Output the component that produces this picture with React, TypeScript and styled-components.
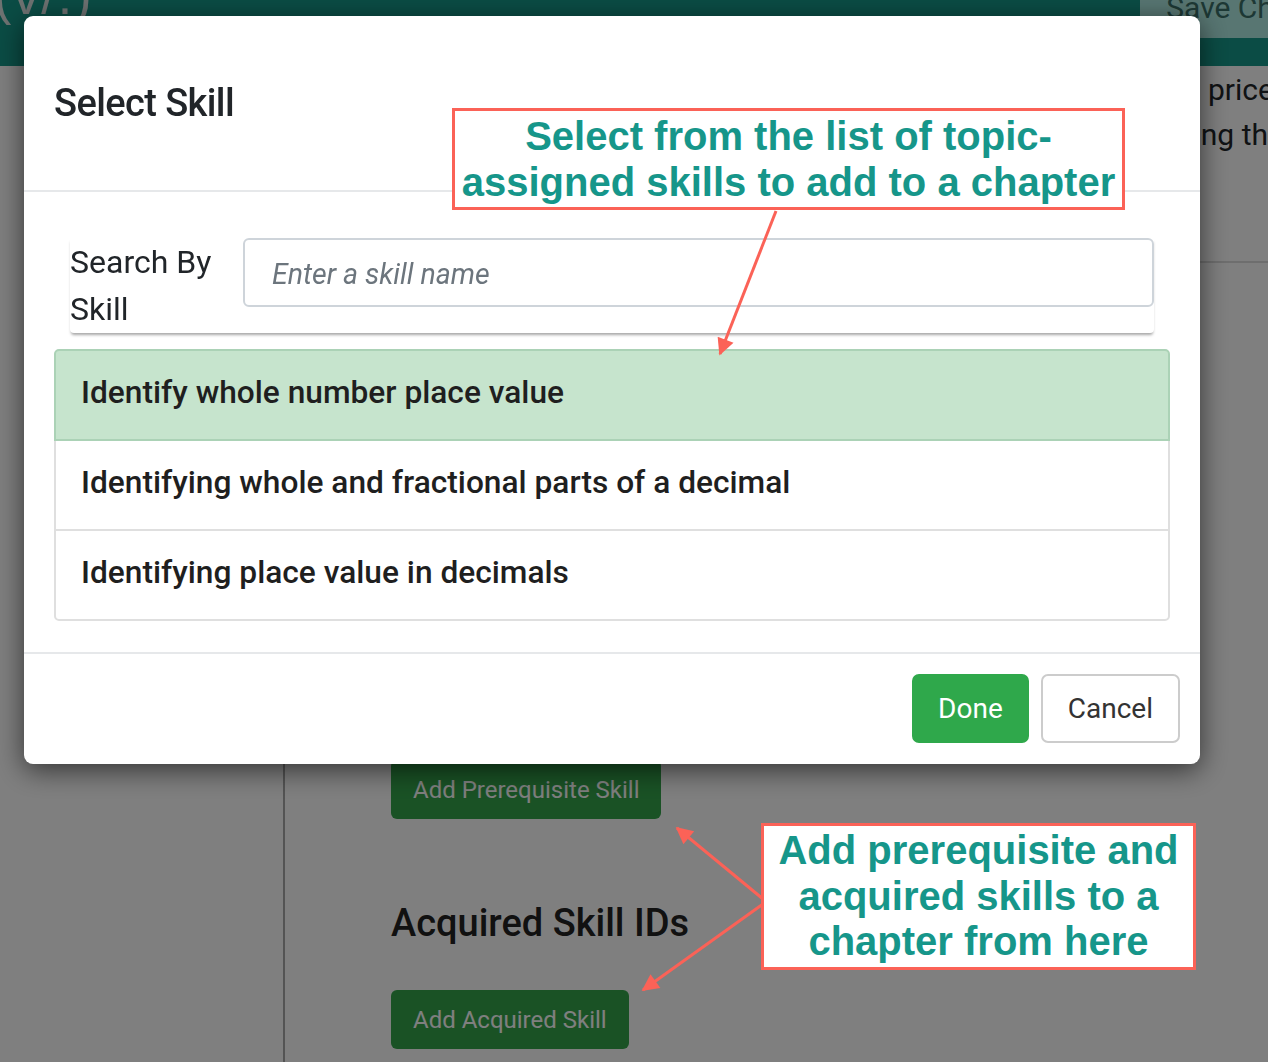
import React from "react"
import styled, { createGlobalStyle } from "styled-components"

const teal = "#16968a"
const coral = "#fb6257"

const skills = [
  "Identify whole number place value",
  "Identifying whole and fractional parts of a decimal",
  "Identifying place value in decimals",
]

const App = () => {
  return (
    <>
      <GlobalStyle />
      <StyledPage>
        <StyledTopBar>
          <StyledLogo>(v/.)</StyledLogo>
          <StyledSaveButton>Save Changes</StyledSaveButton>
        </StyledTopBar>
        <StyledLayout>
          <StyledSidebar />
          <StyledMain>
            <StyledIntro>
              <StyledIntroLine>prices for</StyledIntroLine>
              <StyledIntroLine $shift={ -30 }>sing the</StyledIntroLine>
            </StyledIntro>
            <StyledDivider />
            <StyledSection>
              <StyledSectionTitle>Prerequisite Skill IDs</StyledSectionTitle>
              <StyledPageButton>Add Prerequisite Skill</StyledPageButton>
            </StyledSection>
            <StyledSection>
              <StyledSectionTitle>Acquired Skill IDs</StyledSectionTitle>
              <StyledPageButton>Add Acquired Skill</StyledPageButton>
            </StyledSection>
          </StyledMain>
        </StyledLayout>
      </StyledPage>

      <StyledBackdrop />

      <StyledModal>
        <StyledModalHeader>
          <StyledModalTitle>Select Skill</StyledModalTitle>
        </StyledModalHeader>
        <StyledModalBody>
          <StyledSearch>
            <StyledSearchLabel>Search By Skill</StyledSearchLabel>
            <StyledSearchInput placeholder="Enter a skill name" />
          </StyledSearch>
          <StyledList>
            {
              skills.map((s, i) => (
                <StyledListItem key={ s } $active={ i === 0 }>{ s }</StyledListItem>
              ))
            }
          </StyledList>
        </StyledModalBody>
        <StyledModalFooter>
          <StyledFooterButton $variant="primary">Done</StyledFooterButton>
          <StyledFooterButton $variant="secondary">Cancel</StyledFooterButton>
        </StyledModalFooter>
      </StyledModal>

      <StyledArrows width="1268" height="1062" viewBox="0 0 1268 1062">
        <defs>
          <marker id="head" viewBox="0 0 10 10" refX="9" refY="5" markerWidth="22" markerHeight="17" markerUnits="userSpaceOnUse" orient="auto">
            <path d="M0,0 L10,5 L0,10 z" fill={ coral } />
          </marker>
        </defs>
        <line x1="776" y1="211" x2="720" y2="354" stroke={ coral } strokeWidth="3" markerEnd="url(#head)" />
        <line x1="763" y1="899" x2="677" y2="828" stroke={ coral } strokeWidth="3" markerEnd="url(#head)" />
        <line x1="763" y1="904" x2="643" y2="990" stroke={ coral } strokeWidth="3" markerEnd="url(#head)" />
      </StyledArrows>

      <StyledCallout $top={ 108 } $left={ 452 } $width={ 673 } $lineHeight={ 46 }>
        Select from the list of topic-<br />assigned skills to add to a chapter
      </StyledCallout>
      <StyledCallout $top={ 823 } $left={ 761 } $width={ 435 } $lineHeight={ 45.5 }>
        Add prerequisite and<br />acquired skills to a<br />chapter from here
      </StyledCallout>
    </>
  )
}

const GlobalStyle = createGlobalStyle`
  html, body {
    margin: 0;
    padding: 0;
  }
  body {
    width: 1268px;
    height: 1062px;
    overflow: hidden;
    background: #ffffff;
    color: #212529;
    font-family: Roboto, "Liberation Sans", sans-serif;
  }
  * {
    box-sizing: border-box;
  }
`

const StyledPage = styled("div")`
  width: 1268px;
  height: 1062px;
  overflow: hidden;
  display: flex;
  flex-direction: column;
`

const StyledTopBar = styled("header")`
  height: 96px;
  margin-top: -30px;
  flex-shrink: 0;
  background-color: #16998a;
  display: flex;
  justify-content: space-between;
  align-items: flex-start;
`

const StyledLogo = styled("div")`
  margin: -4px 0 0 -6px;
  font-family: "Liberation Sans", sans-serif;
  font-size: 52px;
  line-height: 60px;
  color: #dce4e3;
  letter-spacing: 2px;
`

const StyledSaveButton = styled("button")`
  height: 68px;
  margin-right: -113px;
  padding: 8px 26px 0;
  border: 0;
  border-radius: 0 0 0 6px;
  background-color: #b0ede5;
  color: #3a7069;
  font-family: Roboto, sans-serif;
  font-size: 30px;
  line-height: 36px;
  white-space: nowrap;
`

const StyledLayout = styled("div")`
  flex: 1;
  display: grid;
  grid-template-columns: 285px 1fr;
`

const StyledSidebar = styled("aside")`
  border-right: 2px solid #a8a8a8;
`

const StyledMain = styled("main")`
  display: flex;
  flex-direction: column;
  min-width: 0;
`

const StyledIntro = styled("div")`
  padding: 1px 0 0 923px;
  font-size: 30px;
  line-height: 45px;
  color: #212529;
  white-space: nowrap;
`

const StyledIntroLine = styled("div")<{ $shift?: number }>`
  margin-left: ${ ({ $shift }) => $shift ?? 0 }px;
`

const StyledDivider = styled("hr")`
  margin: 104px 0 0;
  border: 0;
  border-top: 2px solid #dcdcdc;
`

const StyledSection = styled("section")`
  padding-left: 106px;
  &:first-of-type {
    margin-top: 408px;
  }
  & + & {
    margin-top: 82px;
  }
`

const StyledSectionTitle = styled("h3")`
  margin: 0 0 44px;
  font-size: 38px;
  line-height: 45px;
  font-weight: 500;
  color: #222;
`

const StyledPageButton = styled("button")`
  height: 59px;
  padding: 0 22px;
  border: 0;
  border-radius: 6px;
  background-color: #34a54b;
  color: #ffffff;
  font-family: Roboto, sans-serif;
  font-size: 24px;
`

const StyledBackdrop = styled("div")`
  position: fixed;
  inset: 0;
  background-color: rgba(0, 0, 0, 0.5);
`

const StyledModal = styled("div")`
  position: fixed;
  top: 16px;
  left: 24px;
  width: 1176px;
  background: #ffffff;
  border-radius: 9px;
  box-shadow: 0 6px 28px rgba(0, 0, 0, 0.6);
  display: flex;
  flex-direction: column;
`

const StyledModalHeader = styled("div")`
  padding: 64px 30px 64px;
  border-bottom: 2px solid #e6e8ea;
`

const StyledModalTitle = styled("h2")`
  margin: 0;
  font-size: 38px;
  line-height: 46px;
  font-weight: 500;
  letter-spacing: -0.6px;
  color: #212529;
`

const StyledModalBody = styled("div")`
  padding: 46px 30px 31px;
  display: flex;
  flex-direction: column;
  gap: 16px;
`

const StyledSearch = styled("div")`
  margin: 0 16px;
  display: grid;
  grid-template-columns: 173px 1fr;
  align-items: start;
  background: #ffffff;
  border-radius: 0 0 4px 4px;
  box-shadow: 0 3px 3px -1px rgba(0, 0, 0, 0.35);
`

const StyledSearchLabel = styled("label")`
  font-size: 32px;
  line-height: 47px;
  color: #212529;
  padding-top: 1px;
`

const StyledSearchInput = styled("input")`
  height: 69px;
  width: 100%;
  padding: 4px 27px 0;
  border: 2px solid #ced4da;
  border-radius: 6px;
  font-family: Roboto, sans-serif;
  font-size: 28.5px;
  color: #495057;
  outline: none;
  &::placeholder {
    font-style: italic;
    color: #6c757d;
  }
`

const StyledList = styled("div")`
  display: flex;
  flex-direction: column;
`

const StyledListItem = styled("div")<{ $active?: boolean }>`
  position: relative;
  height: 92px;
  padding: 0 25px 6px;
  display: flex;
  align-items: center;
  border: 2px solid ${ ({ $active }) => $active ? "#abd2b6" : "#dfdfdf" };
  background-color: ${ ({ $active }) => $active ? "#c6e4cd" : "#ffffff" };
  z-index: ${ ({ $active }) => $active ? 1 : 0 };
  font-size: 31.7px;
  font-weight: 500;
  color: #1f1f1f;
  & + & {
    margin-top: -2px;
  }
  &:first-child {
    border-radius: 5px 5px 0 0;
  }
  &:last-child {
    border-radius: 0 0 5px 5px;
  }
`

const StyledModalFooter = styled("div")`
  padding: 20px 20px 21px;
  border-top: 2px solid #e6e8ea;
  display: flex;
  justify-content: flex-end;
  gap: 12px;
`

const StyledFooterButton = styled("button")<{ $variant: "primary" | "secondary" }>`
  height: 69px;
  padding: 0 ${ ({ $variant }) => $variant === "primary" ? 24 : 25 }px;
  border-radius: 7px;
  border: 2px solid ${ ({ $variant }) => $variant === "primary" ? "#2fa84b" : "#cccccc" };
  background-color: ${ ({ $variant }) => $variant === "primary" ? "#2fa84b" : "#ffffff" };
  color: ${ ({ $variant }) => $variant === "primary" ? "#ffffff" : "#333333" };
  font-family: Roboto, sans-serif;
  font-size: 28px;
`

const StyledArrows = styled("svg")`
  position: absolute;
  top: 0;
  left: 0;
  pointer-events: none;
  z-index: 5;
`

const StyledCallout = styled("div")<{ $top: number, $left: number, $width: number, $lineHeight: number }>`
  position: absolute;
  top: ${ ({ $top }) => $top }px;
  left: ${ ({ $left }) => $left }px;
  width: ${ ({ $width }) => $width }px;
  padding: 2px 0;
  border: 3px solid ${ coral };
  background: #ffffff;
  color: ${ teal };
  font-family: "Liberation Sans", Arial, sans-serif;
  font-weight: 700;
  font-size: 40px;
  line-height: ${ ({ $lineHeight }) => $lineHeight }px;
  text-align: center;
  white-space: nowrap;
  z-index: 6;
`

export default App
